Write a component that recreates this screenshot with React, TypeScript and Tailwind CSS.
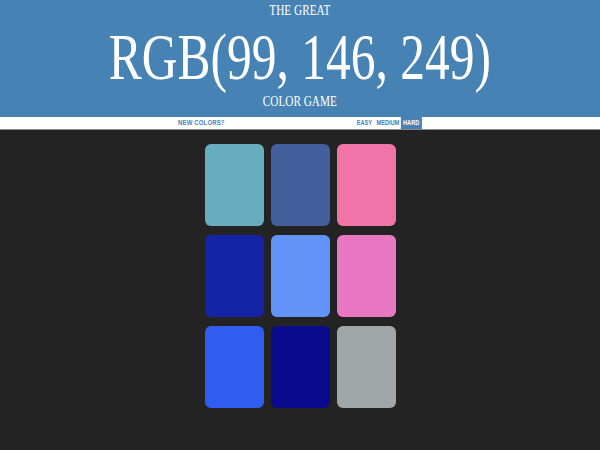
import React from "react";

const colors = [
  "#67adbf",
  "#425f9c",
  "#f074a7",
  "#1524a6",
  "#6392f9",
  "#e877c4",
  "#305cf0",
  "#0a0b8c",
  "#9ea6a8",
];

const serif = { fontFamily: '"Liberation Serif", "Times New Roman", serif' };

const App = () => {
  return (
    <div className="min-h-[450px] w-[600px] bg-[#232323]">
      {/* Header */}
      <div
        className="h-[117px] bg-[#4682b4] text-white flex flex-col items-center"
        style={serif}
      >
        <div className="scale-x-75 flex flex-col items-center">
          <div className="text-[15px] leading-[15px] mt-[3px]">THE GREAT</div>
          <div className="text-[66px] leading-[66px] mt-[6px]">
            RGB(99, 146, 249)
          </div>
          <div className="text-[15px] leading-[15px] mt-[4px]">COLOR GAME</div>
        </div>
      </div>

      {/* Stripe */}
      <div
        className="h-[13px] bg-white border-b border-[#8a8a8a]"
        style={{ fontFamily: '"Liberation Sans", Arial, sans-serif' }}
      >
        <div className="mx-auto w-[244px] h-full flex justify-between text-[8px] font-bold text-[#4682b4]">
          <button className="scale-x-75 origin-left leading-[12px] h-full uppercase tracking-[0.2px]">
            New Colors?
          </button>
          <div className="scale-x-75 origin-right flex h-full text-[7.5px]">
            <button className="px-[1px] leading-[12px] uppercase">Easy</button>
            <button className="px-[2px] ml-[3px] leading-[12px] uppercase">
              Medium
            </button>
            <button className="px-[3px] leading-[12px] uppercase bg-[#4682b4] text-white">
              Hard
            </button>
          </div>
        </div>
      </div>

      {/* Squares */}
      <div className="mx-auto w-[191px] pt-[14px] grid grid-cols-3 gap-x-[7px] gap-y-[9.5px]">
        {colors.map((c) => (
          <div
            key={c}
            className="h-[81.5px] rounded-[6px]"
            style={{ backgroundColor: c }}
          />
        ))}
      </div>
    </div>
  );
};

export default App;
